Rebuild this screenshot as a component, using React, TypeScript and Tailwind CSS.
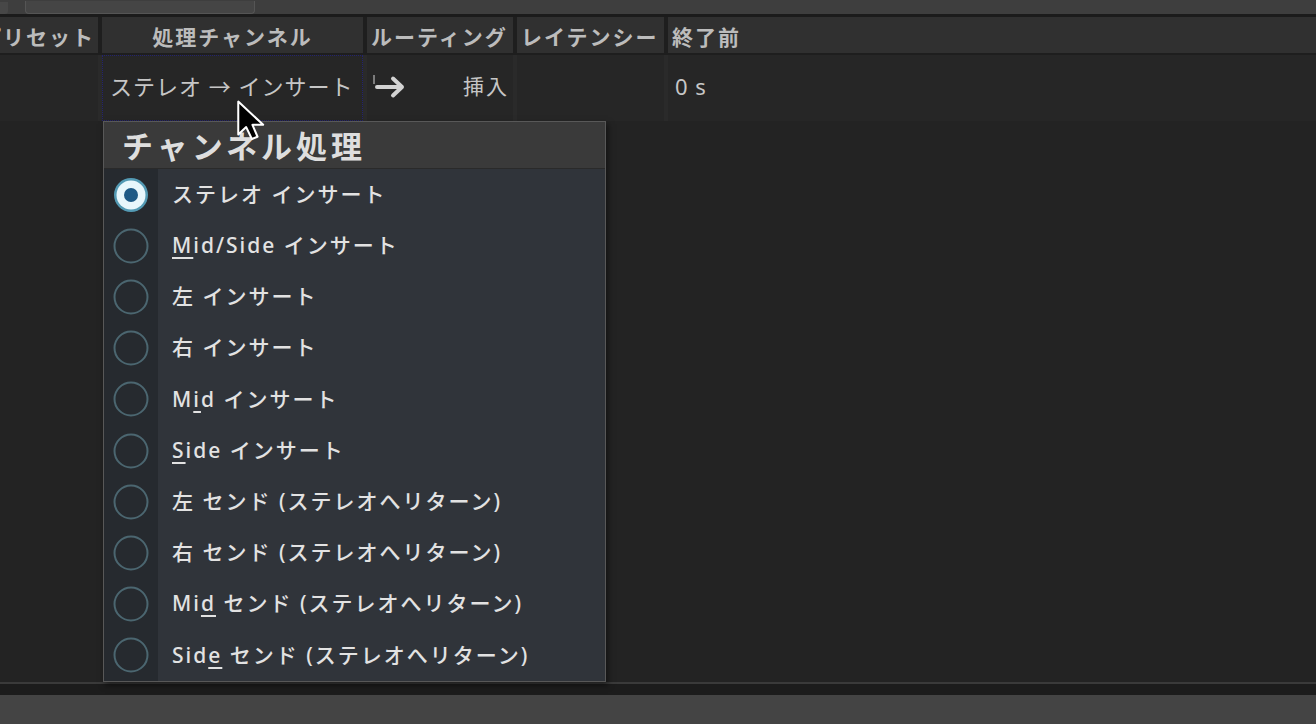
import React from "react";

const FONT = {
  fontFamily: '"Noto Sans", "Noto Sans CJK JP", sans-serif',
};

interface MenuItem {
  pre: string;
  mark?: string;
  post: string;
  checked?: boolean;
}

const ITEMS: MenuItem[] = [
  { pre: "ステレオ インサート", post: "", checked: true },
  { pre: "", mark: "M", post: "id/Side インサート" },
  { pre: "左 インサート", post: "" },
  { pre: "右 インサート", post: "" },
  { pre: "M", mark: "i", post: "d インサート" },
  { pre: "", mark: "S", post: "ide インサート" },
  { pre: "左 センド (ステレオへリターン)", post: "" },
  { pre: "右 センド (ステレオへリターン)", post: "" },
  { pre: "Mi", mark: "d", post: " センド (ステレオへリターン)" },
  { pre: "Sid", mark: "e", post: " センド (ステレオへリターン)" },
];

function Radio({ checked }: { checked?: boolean }) {
  if (checked) {
    return (
      <svg width="38" height="38" viewBox="0 0 38 38">
        <circle cx="19" cy="19" r="17" fill="#5fb6d6" opacity="0.8" />
        <circle cx="19" cy="19" r="14.5" fill="#e8f7fc" />
        <circle cx="19" cy="19" r="7" fill="#1e5a86" />
      </svg>
    );
  }
  return (
    <svg width="38" height="38" viewBox="0 0 38 38">
      <circle cx="19" cy="19" r="16.5" fill="none" stroke="#4b6670" strokeWidth="2" />
    </svg>
  );
}

function Cursor() {
  return (
    <svg width="34" height="46" viewBox="0 0 30 40" className="absolute left-[236px] top-[99px] z-10">
      <path
        d="M2 2 L2 31 L9 24.5 L14 35 L19 33 L14.5 22.5 L24 22.5 Z"
        fill="#000"
        stroke="#fff"
        strokeWidth="1.8"
        strokeLinejoin="round"
      />
    </svg>
  );
}

export default function App() {
  return (
    <div
      className="relative flex h-[724px] w-[1316px] flex-col overflow-hidden bg-[#232323]"
      style={FONT}
    >
      {/* top toolbar strip */}
      <div className="flex h-[14px] items-end gap-[17px] bg-[#3e3e3e]">
        <div className="h-[12px] w-[8px] rounded-br-[3px] bg-[#474747]" />
        <div className="h-[13px] w-[230px] rounded-b-[4px] border border-t-0 border-[#555] bg-[#454545]" />
      </div>
      <div className="h-[3px] bg-[#1b1b1b]" />

      {/* header */}
      <div className="flex h-[36px] gap-[4px] bg-[#1e1e1e] pt-0 text-[21px] font-bold tracking-[2px] text-[#bcbcbc]">
        <div className="flex w-[98px] items-center justify-end overflow-hidden whitespace-nowrap bg-[#303030] pr-[3px] pt-[5px]">
          プリセット
        </div>
        <div className="flex w-[261px] items-center justify-center whitespace-nowrap bg-[#303030] pt-[5px]">
          処理チャンネル
        </div>
        <div className="flex w-[146px] items-center whitespace-nowrap bg-[#303030] pl-[4px] pt-[5px]">
          ルーティング
        </div>
        <div className="flex w-[147px] items-center whitespace-nowrap bg-[#303030] pl-[4px] pt-[5px]">
          レイテンシー
        </div>
        <div className="flex flex-1 items-center whitespace-nowrap bg-[#303030] pl-[4px] pt-[5px]">
          終了前
        </div>
      </div>
      <div className="h-[2px] bg-[#1e1e1e]" />

      {/* data row */}
      <div className="flex h-[66px] gap-[4px] bg-[#2a2a2a] text-[22px] text-[#c6c6c6]">
        <div className="w-[98px] bg-[#262626]" />
        <div className="flex w-[261px] items-center whitespace-nowrap border border-dotted border-[#23236e] bg-[#262626] pb-[3px] pl-[7px] tracking-[1px]">
          ステレオ → インサート
        </div>
        <div className="flex w-[146px] items-center justify-between bg-[#262626] pb-[2px] pl-[5px] pr-[4px]">
          <svg width="36" height="28" viewBox="0 0 36 28">
            <line x1="2" y1="2" x2="2" y2="11" stroke="#9a9a9a" strokeWidth="1.5" />
            <path
              d="M5 14 H30 M21 5.5 L30 14 L21 22.5"
              fill="none"
              stroke="#d2d2d2"
              strokeWidth="4"
              strokeLinecap="round"
              strokeLinejoin="round"
            />
          </svg>
          <span className="text-[21px] tracking-[2px]">挿入</span>
        </div>
        <div className="w-[147px] bg-[#262626]" />
        <div className="flex flex-1 items-center bg-[#262626] pb-[3px] pl-[7px] tracking-[1px]">0 s</div>
      </div>

      <div className="flex-1 bg-[#232323]" />

      {/* bottom */}
      <div className="h-[2px] bg-[#3a3a3a]" />
      <div className="h-[11px] bg-[#1c1c1c]" />
      <div className="h-[29px] bg-[#444444]" />

      {/* popup menu */}
      <div className="absolute left-[103px] top-[121px] flex w-[503px] flex-col border border-[#585858] bg-[#30343a] shadow-[2px_3px_6px_rgba(0,0,0,0.5)]">
        <div className="flex h-[47px] items-center border-b border-[#2a2a2a] bg-[#3a3a3a] pl-[18px] pt-[2px] text-[31px] font-bold tracking-[4px] text-[#dedede]">
          チャンネル処理
        </div>
        <div className="flex flex-col">
          {ITEMS.map((item, i) => (
            <div key={i} className="flex h-[51.2px] items-center">
              <div className="flex h-full w-[54px] items-center justify-center bg-[#262a2f]">
                <Radio checked={item.checked} />
              </div>
              <div className="whitespace-pre pl-[14px] text-[21px] font-medium tracking-[2px] text-[#e2e2e2]">
                {item.pre}
                {item.mark && <span className="underline decoration-[2px] underline-offset-[4px]">{item.mark}</span>}
                {item.post}
              </div>
            </div>
          ))}
        </div>
      </div>

      <Cursor />
    </div>
  );
}
